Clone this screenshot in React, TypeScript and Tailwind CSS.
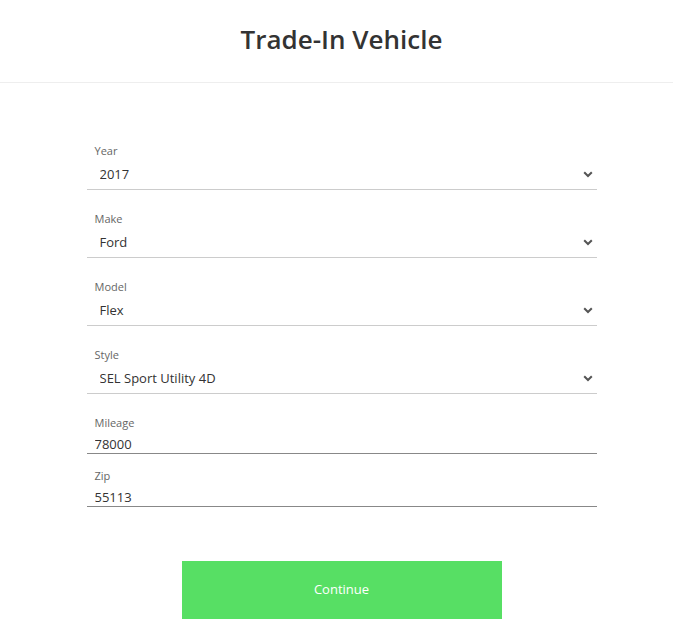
import { useState } from 'react';

const selects = [
    { label: 'Year', value: '2017', options: ['2019', '2018', '2017', '2016', '2015'] },
    { label: 'Make', value: 'Ford', options: ['Chevrolet', 'Ford', 'Honda', 'Toyota'] },
    { label: 'Model', value: 'Flex', options: ['Edge', 'Escape', 'Explorer', 'Flex'] },
    { label: 'Style', value: 'SEL Sport Utility 4D', options: ['SE Sport Utility 4D', 'SEL Sport Utility 4D', 'Limited Sport Utility 4D'] },
];

function Chevron() {
    return (
        <svg width="10" height="7" viewBox="0 0 10 7" className="absolute right-[4px] top-[7px] pointer-events-none">
            <path d="M1.2 1.2 L5 5 L8.8 1.2" fill="none" stroke="#555" strokeWidth="2" />
        </svg>
    );
}

export default function App() {
    const [values, setValues] = useState(selects.map((s) => s.value));
    const [mileage, setMileage] = useState('78000');
    const [zip, setZip] = useState('55113');

    return (
        <div className="min-h-screen bg-white text-[#333]" style={{ fontFamily: '"Open Sans", "Noto Sans", sans-serif' }}>
            <header className="h-[83px] border-b border-[#eeeeee] flex items-center justify-center pl-[10px]">
                <h1 className="text-[26px] font-semibold leading-none text-[#333] pb-[5px]">Trade-In Vehicle</h1>
            </header>

            <div className="pl-[10px]">
                <form className="mx-auto w-[510px] pt-[60px]" onSubmit={(e) => e.preventDefault()}>
                    {selects.map((s, i) => (
                        <div key={s.label} className="mb-[21px]">
                            <label className="block pl-2 text-[11px] leading-[16px] text-[#666]">{s.label}</label>
                            <div className="relative mt-[5px] border-b border-[#cccccc] pb-[5px]">
                                <select
                                    value={values[i]}
                                    onChange={(e) => setValues(values.map((v, j) => (j === i ? e.target.value : v)))}
                                    className="block w-full appearance-none bg-transparent pl-[13px] pr-6 text-[13px] leading-[20px] h-[20px] text-[#333] outline-none"
                                >
                                    {s.options.map((o) => (
                                        <option key={o}>{o}</option>
                                    ))}
                                </select>
                                <Chevron />
                            </div>
                        </div>
                    ))}

                    <div>
                        <label className="block pl-2 text-[11px] leading-[16px] text-[#666]">Mileage</label>
                        <input
                            value={mileage}
                            onChange={(e) => setMileage(e.target.value)}
                            className="mt-[3px] block w-full border-b border-[#888888] pl-2 text-[13px] leading-[19px] h-[20px] text-[#333] outline-none"
                        />
                    </div>

                    <div className="mt-[14px]">
                        <label className="block pl-2 text-[11px] leading-[16px] text-[#666]">Zip</label>
                        <input
                            value={zip}
                            onChange={(e) => setZip(e.target.value)}
                            className="mt-[3px] block w-full border-b border-[#888888] pl-2 text-[13px] leading-[19px] h-[20px] text-[#333] outline-none"
                        />
                    </div>

                    <div className="flex justify-center pt-[54px]">
                        <button type="submit" className="w-[320px] h-[58px] bg-[#57df64] text-white text-[13px]">
                            Continue
                        </button>
                    </div>
                </form>
            </div>
        </div>
    );
}
